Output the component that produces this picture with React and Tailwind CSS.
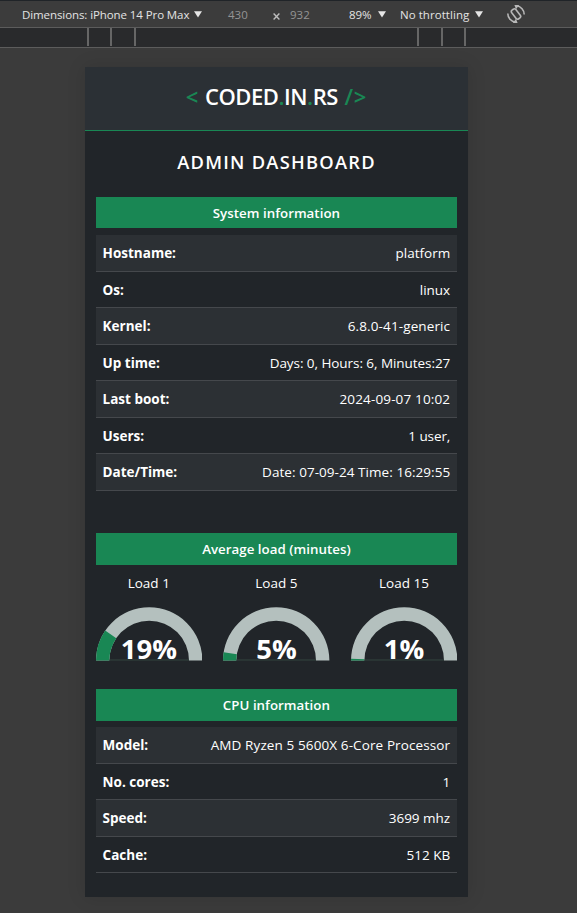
import React from "react";

const system = [
  ["Hostname:", "platform", ""],
  ["Os:", "linux", ""],
  ["Kernel:", "6.8.0-41-generic", "tracking-[0.12px]"],
  ["Up time:", "Days: 0, Hours: 6, Minutes:27", "tracking-[-0.06px]"],
  ["Last boot:", "2024-09-07 10:02", "tracking-[0.15px]"],
  ["Users:", "1 user,", "tracking-[-0.1px]"],
  ["Date/Time:", "Date: 07-09-24 Time: 16:29:55", "tracking-[0.05px]"],
];

const cpu = [
  ["Model:", "AMD Ryzen 5 5600X 6-Core Processor", "tracking-[0.11px]"],
  ["No. cores:", "1", ""],
  ["Speed:", "3699 mhz", ""],
  ["Cache:", "512 KB", ""],
];

const loads = [
  ["Load 1", 19],
  ["Load 5", 5],
  ["Load 15", 1],
];

function Caret() {
  return (
    <svg width="8" height="7" viewBox="0 0 8 7" className="shrink-0">
      <path d="M0 0.3H8L4 6.6Z" fill="#e6e6e6" />
    </svg>
  );
}

function RotateIcon() {
  return (
    <svg width="20" height="20" viewBox="0 0 20 20" fill="none" stroke="#b8b8b8" strokeWidth="1.6">
      <rect x="7.4" y="4.6" width="5.2" height="10.8" rx="1.8" transform="rotate(-38 10 10)" />
      <path d="M1.8 9.6C1.8 14 5 17.6 9.6 18.2M18.2 10.4C18.2 6 15 2.4 10.4 1.8" />
      <path d="M11.6 18.9H6.8L10 14.8ZM8.4 1.1H13.2L10 5.2Z" fill="#b8b8b8" stroke="none" />
    </svg>
  );
}

function Toolbar() {
  return (
    <div className="flex h-[28px] items-center border-t border-b border-t-[#202428] border-b-[#5c5c5c] bg-[#3c3c3c] pt-[2px] text-[11.5px] text-[#e3e3e3]">
      <span className="ml-[22px] w-[168px] whitespace-nowrap tracking-[-0.09px]">Dimensions: iPhone 14 Pro Max</span>
      <span className="-mt-[1px] ml-[4px]"><Caret /></span>
      <span className="ml-[26px] w-[20px] text-[#949494]">430</span>
      <svg width="7" height="7" viewBox="0 0 7 7" className="mt-[3px] ml-[25px]" stroke="#bdbdbd" strokeWidth="1.4">
        <path d="M.6 .6L6.4 6.4M6.4 .6L.6 6.4" />
      </svg>
      <span className="ml-[10px] w-[20px] text-[#949494]">932</span>
      <span className="ml-[39px] w-[24px] tracking-[-0.1px]">89%</span>
      <span className="-mt-[1px] ml-[5px]"><Caret /></span>
      <span className="ml-[14px] w-[70px] whitespace-nowrap tracking-[0.05px]">No throttling</span>
      <span className="-mt-[1px] ml-[5px]"><Caret /></span>
      <span className="-mt-[2px] ml-[23px]"><RotateIcon /></span>
    </div>
  );
}

function Ruler() {
  return (
    <div className="flex h-[20px] border-b border-[#5c5c5c] bg-[#292a2c]">
      <div className="ml-[87px] h-[18px] w-[2px] bg-[#666]" />
      <div className="ml-[21px] h-[18px] w-[2px] bg-[#666]" />
      <div className="ml-[22px] h-[18px] w-[2px] bg-[#666]" />
      <div className="ml-[281px] h-[18px] w-[2px] bg-[#666]" />
      <div className="ml-[22px] h-[18px] w-[2px] bg-[#666]" />
      <div className="ml-[21px] h-[18px] w-[2px] bg-[#666]" />
    </div>
  );
}

function Banner({ children }) {
  return (
    <h2 className="flex h-[31.4px] items-center justify-center bg-[#198754] pt-[2.4px] text-[13.3px] font-semibold tracking-[0.03px] text-white">
      {children}
    </h2>
  );
}

function Table({ rows }) {
  return (
    <dl className="mt-[6.8px]">
      {rows.map(([label, value, tracking]) => (
        <div
          key={label}
          className="flex h-[36.5px] items-center justify-between border-b border-[#45484c] px-[7px] pt-[0.6px] text-[13.5px] text-white odd:bg-[#2c3034]"
        >
          <dt className="font-bold">{label}</dt>
          <dd className={tracking}>{value}</dd>
        </div>
      ))}
    </dl>
  );
}

function Gauge({ label, value }) {
  const a = (Math.PI * value) / 100;
  const p = (r) => `${53.2 - r * Math.cos(a)} ${53.5 - r * Math.sin(a)}`;
  return (
    <div className="flex w-[106.4px] flex-col items-center">
      <span className="text-[13.5px] leading-[20px] text-white">{label}</span>
      <div className="relative mt-[14px] h-[54px] w-full">
        <svg width="106.4" height="54" viewBox="0 0 106.4 54">
          <path d="M0 53.5A53.2 53.2 0 0 1 106.4 53.5H93A39.8 39.8 0 0 0 13.4 53.5Z" fill="#b4c0be" />
          <path d={`M0 53.5A53.2 53.2 0 0 1 ${p(53.2)}L${p(39.8)}A39.8 39.8 0 0 0 13.4 53.5Z`} fill="#198754" />
          <path d="M13.4 53H93" stroke="#33443f" />
        </svg>
        <span className="absolute inset-x-0 top-[24px] text-center text-[27.5px] leading-[36px] font-bold text-white">
          {value}%
        </span>
      </div>
    </div>
  );
}

export default function App() {
  return (
    <div className="flex h-[913px] w-[577px] flex-col overflow-hidden bg-[#3b3b3b] font-['Open_Sans','Noto_Sans',sans-serif]">
      <Toolbar />
      <Ruler />
      <main className="mt-[19px] ml-[85px] h-[830px] w-[383px] bg-[#212529] shadow-[0_0_18px_rgba(0,0,0,0.12)]">
        <header className="flex h-[64px] justify-center border-b border-[#198754] bg-[#2b3035] pt-[13px] text-[22px] leading-[32px] whitespace-pre">
          <span className="font-semibold tracking-[0.4px] text-[#198754]">&lt; </span>
          <span className="font-semibold tracking-[-0.45px] text-white">
            CODED<span className="text-[#198754]">.</span>IN<span className="text-[#198754]">.</span>RS
          </span>
          <span className="font-semibold tracking-[0.8px] text-[#198754]"> /&gt;</span>
        </header>
        <h1 className="mt-[17px] text-center text-[18.3px] leading-[28px] font-semibold tracking-[1.25px] text-white">ADMIN DASHBOARD</h1>
        <div className="mt-[21.1px] pr-[10.8px] pl-[10.6px]">
          <Banner>System information</Banner>
          <Table rows={system} />
          <div className="h-[42.5px]" />
          <Banner>Average load (minutes)</Banner>
          <div className="mt-[8.4px] flex justify-between">
            {loads.map(([label, value]) => (
              <Gauge key={label} label={label} value={value} />
            ))}
          </div>
          <div className="h-[28.1px]" />
          <Banner>CPU information</Banner>
          <Table rows={cpu} />
        </div>
      </main>
    </div>
  );
}
